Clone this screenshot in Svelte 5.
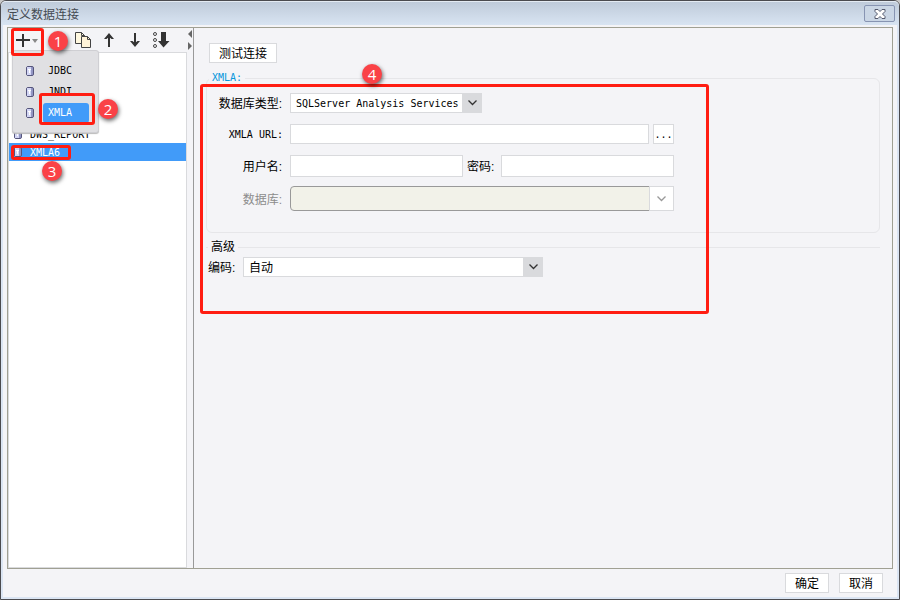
<script lang="ts">
  type Mark = { left: number; top: number; width: number; height: number };

  const menuItems = ["JDBC", "JNDI", "XMLA"];
  const connections = ["DWS_REPORT", "XMLA6"];

  const frames: Mark[] = [
    { left: 11, top: 28, width: 33, height: 28 },
    { left: 39, top: 93, width: 56, height: 32 },
    { left: 11, top: 145, width: 60, height: 15 },
    { left: 200, top: 84, width: 509, height: 230 },
  ];
  const badges = [
    { left: 48, top: 31 },
    { left: 98, top: 99 },
    { left: 42, top: 161 },
    { left: 362, top: 64 },
  ];

  let selected = $state("XMLA6");
  let url = $state("");
  let user = $state("");
  let password = $state("");
</script>

{#snippet dbIcon()}
  <svg width="8" height="10" viewBox="0 0 8 10" aria-hidden="true">
    <rect x="0.5" y="0.5" width="7" height="9" rx="1.5" fill="#a9acd6" stroke="#55557c" />
    <path d="M1 1h4v8H1z" fill="#d3d6f5" />
    <path d="M2 3h3v1H4v3H3V4H2z" fill="#fff" />
    <path d="M6 1v8" stroke="#7c80b0" />
  </svg>
{/snippet}

{#snippet chevron()}
  <svg class="chevron" width="9" height="6" viewBox="0 0 9 6" aria-hidden="true">
    <path d="M0.5 0.5l4 4 4-4" fill="none" stroke="currentColor" stroke-width="1.3" />
  </svg>
{/snippet}

<div class="window">
  <header class="titlebar">
    <h1>定义数据连接</h1>
    <button class="close" aria-label="关闭">
      <svg width="12" height="10" viewBox="0 0 12 10">
        <path d="M1 .5h3l2 2 2-2h3v2L8.500 5 11 7.500v2H8l-2-2-2 2H1v-2L3.500 5 1 2.500z" fill="#fff" stroke="#53586c" />
      </svg>
    </button>
  </header>

  <main class="body">
    <section class="side">
      <div class="toolbar">
        <button class="add" aria-label="新增">
          <svg width="24" height="16" viewBox="0 0 24 16">
            <path d="M8 2v13M1 8h14" stroke="#333" stroke-width="2" />
            <path d="M17 7h6l-3 4z" fill="#888" />
          </svg>
        </button>
        <button class="copy" aria-label="复制">
          <svg width="17" height="16" viewBox="0 0 17 16">
            <path d="M.5 .5h6l3 3v8h-9z" fill="#fff8df" stroke="#444" />
            <path d="M6.500 4.500h6l3 3v8h-9z" fill="#fff3d8" stroke="#444" />
            <path d="M12.500 4.500v3h3M6.500 .5v3h3" fill="none" stroke="#444" />
          </svg>
        </button>
        <button class="up" aria-label="上移">
          <svg width="10" height="14" viewBox="0 0 10 14">
            <path d="M5 3v11" stroke="#333" stroke-width="2" />
            <path d="M5 0l5 6H7.500L5 4 2.500 6H0z" fill="#333" />
          </svg>
        </button>
        <button class="down" aria-label="下移">
          <svg width="10" height="14" viewBox="0 0 10 14">
            <path d="M5 0v11" stroke="#333" stroke-width="2" />
            <path d="M5 14L0 8h2.500L5 10l2.500-2H10z" fill="#333" />
          </svg>
        </button>
        <button class="sort" aria-label="排序">
          <svg width="17" height="16" viewBox="0 0 17 16">
            <g fill="none" stroke="#444">
              <circle cx="2" cy="2" r="1.500" />
              <circle cx="2" cy="8" r="1.500" />
              <circle cx="2" cy="14" r="1.500" />
            </g>
            <path d="M8 0h5v9h3.500L10.500 15.500 5 9h3z" fill="#333" />
          </svg>
        </button>
      </div>

      <ul class="list">
        {#each connections as name}
          <li>
            <button class:active={name === selected} onclick={() => (selected = name)}>
              {@render dbIcon()}
              <span>{name}</span>
            </button>
          </li>
        {/each}
      </ul>

      <ul class="menu">
        {#each menuItems as item}
          <li>
            <button class:current={item === "XMLA"}>
              {@render dbIcon()}
              <span>{item}</span>
            </button>
          </li>
        {/each}
      </ul>
    </section>

    <div class="splitter">
      <svg width="5" height="20" viewBox="0 0 5 20" aria-hidden="true">
        <path d="M4 0v8L0 4zM0 12v8l4-4z" fill="#666" />
      </svg>
    </div>

    <section class="content">
      <button class="btn test">测试连接</button>

      <fieldset class="group">
        <legend>XMLA:</legend>
        <div class="row">
          <label for="type">数据库类型:</label>
          <div class="select type">
            <select id="type">
              <option>SQLServer Analysis Services</option>
            </select>
            {@render chevron()}
          </div>
        </div>
        <div class="row">
          <label for="url" class="latin">XMLA URL:</label>
          <div class="fields">
            <input id="url" type="text" bind:value={url} />
            <button class="btn more">...</button>
          </div>
        </div>
        <div class="row tall">
          <label for="user">用户名:</label>
          <div class="fields pair">
            <input id="user" type="text" bind:value={user} />
            <label for="password">密码:</label>
            <input id="password" type="password" bind:value={password} />
          </div>
        </div>
        <div class="row off">
          <label for="database">数据库:</label>
          <div class="select database">
            <select id="database" disabled></select>
            {@render chevron()}
          </div>
        </div>
      </fieldset>

      <fieldset class="advanced">
        <legend>高级</legend>
        <div class="encoding">
          <label for="encoding">编码:</label>
          <div class="select">
            <select id="encoding">
              <option>自动</option>
            </select>
            {@render chevron()}
          </div>
        </div>
      </fieldset>
    </section>
  </main>

  <footer>
    <button class="btn">确定</button>
    <button class="btn">取消</button>
  </footer>

  {#each frames as f}
    <div class="frame" style="left: {f.left}px; top: {f.top}px; width: {f.width}px; height: {f.height}px"></div>
  {/each}
  {#each badges as b, i}
    <span class="badge" style="left: {b.left}px; top: {b.top}px">{i + 1}</span>
  {/each}
</div>

<style>
  :global(body) {
    margin: 0;
    background: #c8c8c8;
  }

  *,
  *::after {
    box-sizing: border-box;
  }

  .window {
    position: relative;
    display: flex;
    flex-direction: column;
    min-height: 100vh;
    padding: 0 1px 1px;
    border: 1px solid #4b4b4f;
    border-radius: 6px 6px 0 0;
    background: #f4f4f7;
    box-shadow: inset 0 0 0 2px #dbe5f3;
    color: #000;
    font: 12px/16px "Liberation Sans", "Noto Sans CJK SC", sans-serif;
  }

  button,
  input,
  select {
    margin: 0;
    padding: 0;
    border: 0;
    border-radius: 0;
    background: none;
    color: inherit;
    font: inherit;
  }

  ul {
    margin: 0;
    padding: 0;
    list-style: none;
  }

  svg {
    display: block;
  }

  label {
    white-space: nowrap;
  }

  .titlebar {
    display: flex;
    align-items: center;
    justify-content: space-between;
    height: 24px;
    margin: 0 -1px;
    padding: 0 4px 0 6px;
    border-top: 1px solid #e4ebf3;
    border-radius: 5px 5px 0 0;
    background: linear-gradient(#bfcbda, #d8e4f2);
  }

  h1 {
    margin: 0;
    padding-top: 2px;
    color: #444a52;
    font-size: 12px;
    font-weight: normal;
  }

  .close {
    display: flex;
    align-items: center;
    justify-content: center;
    width: 31px;
    height: 17px;
    border: 1px solid #8794b2;
    border-radius: 2px;
    background: #cad6e5;
  }

  .body {
    display: flex;
    flex: 1;
    margin: 2px 5px 0;
    border: 1px solid #a0a093;
  }

  .side {
    position: relative;
    display: flex;
    flex-direction: column;
    width: 179px;
  }

  .toolbar {
    display: flex;
    align-items: center;
    height: 24px;
    padding-left: 7px;
  }

  .copy {
    margin-left: 36px;
  }

  .up {
    margin-left: 12px;
  }

  .down {
    margin-left: 16px;
  }

  .sort {
    margin-left: 13px;
  }

  .list {
    flex: 1;
    padding-top: 72px;
    border: 1px solid #d9dadd;
    background: #fff;
  }

  .list button {
    display: flex;
    align-items: center;
    gap: 8px;
    width: 100%;
    height: 18px;
    padding-left: 5px;
  }

  .list span,
  .menu span {
    font: 10px/18px "DejaVu Sans Mono", monospace;
  }

  .list span {
    padding-top: 1px;
  }

  .list .active {
    background: #419bf9;
    color: #fff;
  }

  .menu {
    position: absolute;
    left: 4px;
    top: 22px;
    width: 87px;
    padding: 9px 0;
    border: 1px solid #cfcfd3;
    border-radius: 3px;
    background: #e0e0e3;
    box-shadow: 0 1px 1px #bbb;
  }

  .menu button {
    display: flex;
    align-items: center;
    gap: 9px;
    width: 100%;
    height: 21px;
    padding-left: 13px;
  }

  .menu span {
    padding: 1px 17px 1px 5px;
    border-radius: 3px;
  }

  .menu .current span {
    background: #419bf9;
    color: #fff;
  }

  .splitter {
    width: 7px;
    padding: 2px 0 0 1px;
    border-right: 1px solid #999;
  }

  .content {
    flex: 1;
    padding: 15px 12px;
  }

  .btn {
    height: 20px;
    padding-top: 2px;
    border: 1px solid #d9dadd;
    background: #fff;
  }

  .test {
    display: block;
    width: 68px;
    margin-left: 3px;
  }

  fieldset {
    min-width: 0;
    margin: 0;
    border: 1px solid #e6e6e9;
  }

  legend {
    padding: 0 3px;
  }

  .group {
    margin-top: 7px;
    padding: 7px 0 21px;
    border-radius: 6px;
  }

  .group legend {
    margin-left: 2px;
    color: #0797dc;
    font: 10px/16px "DejaVu Sans Mono", monospace;
  }

  .row {
    display: grid;
    grid-template-columns: 76px minmax(0, 384px);
    align-items: center;
    column-gap: 7px;
    margin-bottom: 11px;
  }

  .row.tall {
    margin-bottom: 9px;
  }

  .row.off {
    margin-bottom: 0;
    color: #8c8c8c;
  }

  .row > label {
    padding: 2px 1px 0 0;
    text-align: right;
  }

  .row > .latin {
    padding-right: 0;
    font: 10px/16px "DejaVu Sans Mono", monospace;
  }

  .fields {
    display: flex;
    align-items: center;
    gap: 4px;
  }

  input {
    flex: 1;
    min-width: 0;
    height: 20px;
    padding: 0 4px;
    border: 1px solid #d9dadd;
    background: #fff;
  }

  .pair input {
    height: 22px;
  }

  .pair label {
    width: 30px;
    padding-top: 2px;
  }

  .more {
    width: 21px;
    font: 10px/16px "DejaVu Sans Mono", monospace;
  }

  .select {
    position: relative;
    color: #333;
  }

  select {
    display: block;
    width: 100%;
    height: 20px;
    padding: 2px 20px 0 5px;
    border: 1px solid #d9dadd;
    background: linear-gradient(#d9dadd, #d9dadd) right / 19px 100% no-repeat #fff;
    color: #000;
    appearance: none;
  }

  .type {
    width: 192px;
  }

  .type select {
    font: 10px/16px "DejaVu Sans Mono", monospace;
  }

  .chevron {
    position: absolute;
    top: calc(50% - 3px);
    right: 5px;
    pointer-events: none;
  }

  .database {
    color: #999;
  }

  .database select {
    height: 25px;
    border: 1px solid #999;
    border-radius: 4px 0 0 4px;
    background: #f2f2e9;
    opacity: 1;
  }

  .database::after {
    content: "";
    position: absolute;
    top: 0;
    right: 0;
    width: 25px;
    height: 25px;
    border: 1px solid #d9dadd;
    background: #fff;
    pointer-events: none;
  }

  .database .chevron {
    right: 8px;
    z-index: 1;
  }

  .advanced {
    margin-top: 6px;
    padding: 2px 0 0;
    border-width: 1px 0 0;
  }

  .advanced legend {
    margin-left: 2px;
  }

  .encoding {
    display: flex;
    align-items: center;
    gap: 5px;
    padding-left: 2px;
  }

  .encoding label {
    width: 30px;
    padding-top: 2px;
  }

  .encoding .select {
    width: 300px;
  }

  footer {
    display: flex;
    justify-content: flex-end;
    gap: 10px;
    padding: 4px 15px 5px;
  }

  footer .btn {
    width: 44px;
  }

  .frame {
    position: absolute;
    margin: -1px;
    border: 3px solid #ff1d12;
    border-radius: 3px;
    pointer-events: none;
  }

  .badge {
    position: absolute;
    width: 20px;
    height: 20px;
    margin: -1px;
    border-radius: 50%;
    background: #fa4247;
    box-shadow: 1px 2px 4px rgba(0, 0, 0, 0.6);
    color: #fff;
    font: 15px/20px "Open Sans", sans-serif;
    text-align: center;
  }
</style>
